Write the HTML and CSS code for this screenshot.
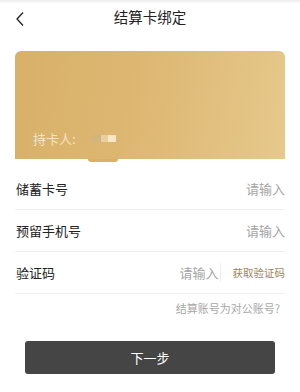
FILE: index.html
```html
<!DOCTYPE html>
<html>
<head>
  <meta charset="utf-8" />
  <title>结算卡绑定</title>
  <link rel="stylesheet" href="styles.css">
</head>
<body>
  <div class="header">
    <a class="back">
      <svg width="10" height="16" viewBox="0 0 10 16"><path d="M8 1.5 L2 8 L8 14.5" fill="none" stroke="#222" stroke-width="1.3"/></svg>
    </a>
    <span class="title">结算卡绑定</span>
  </div>

  <div class="card">
    <div class="holder">
      <span>持卡人:</span>
      <span class="mask"><i class="m1"></i><i class="m2"></i><i class="m3"></i></span>
    </div>
    <div class="notch"></div>
  </div>

  <div class="form">
    <div class="row">
      <span class="label">储蓄卡号</span>
      <span class="input">请输入</span>
    </div>
    <div class="row">
      <span class="label">预留手机号</span>
      <span class="input">请输入</span>
    </div>
    <div class="row">
      <span class="label">验证码</span>
      <span class="input code">请输入</span>
      <span class="get-code">获取验证码</span>
    </div>
  </div>

  <div class="public"><a>结算账号为对公账号?</a></div>

  <div class="actions">
    <a class="next">下一步</a>
  </div>
</body>
</html>
```

FILE: styles.css
```css
html, body {
  margin: 0;
  padding: 0;
}

body {
  width: 300px;
  height: 392px;
  font-family: "Noto Sans CJK SC", "Noto Sans", sans-serif;
  color: #222;
  overflow: hidden;
  background: linear-gradient(to bottom, #ececec 0, #fff 4px);
}

.header {
  display: flex;
  align-items: center;
  justify-content: center;
  height: 32px;
  position: relative;
}

.header .back {
  position: absolute;
  left: 15px;
  top: 8px;
}

.header .title {
  font-size: 14.5px;
  color: #222;
}

.card {
  margin: 19px 15px 0;
  height: 108px;
  border-radius: 6px 6px 0 0;
  background: linear-gradient(100deg, #d8b068 0%, #deb874 50%, #e6c98c 100%);
  display: flex;
  flex-direction: column;
  justify-content: flex-end;
  position: relative;
}

.holder {
  display: flex;
  align-items: center;
  padding: 0 0 11px 18px;
  color: #f4e4c4;
  font-size: 13px;
}

.mask {
  display: flex;
  margin-left: 16px;
}

.mask i {
  display: block;
  height: 7px;
}

.mask .m1 { width: 9px; background: #d2b57d; }
.mask .m2 { width: 7px; background: #e8cf9d; }
.mask .m3 { width: 8px; background: #f8e6c6; }

.notch {
  position: absolute;
  left: 73px;
  bottom: -3px;
  width: 30px;
  height: 3px;
  border-radius: 0 0 15px 15px;
  background: #dcb06a;
}

.form {
  margin: 9px 15px 0;
}

.row {
  display: flex;
  align-items: center;
  height: 41px;
  border-bottom: 1px solid #f0f0f0;
  font-size: 13px;
}

.row .label {
  flex: 1;
  padding-left: 1px;
  color: #222;
}

.row .input {
  color: #a5a5a5;
}

.row .input.code {
  padding-right: 1px;
  border-right: 1px solid #eee;
}

.row .get-code {
  margin-left: 12px;
  font-size: 10.5px;
  color: #9c8558;
}

.public {
  display: flex;
  justify-content: flex-end;
  padding: 6px 20px 0;
  font-size: 11px;
  color: #a8a8a8;
}

.actions {
  padding: 25px 25px 0;
}

.next {
  display: flex;
  align-items: center;
  justify-content: center;
  height: 33px;
  border-radius: 3px;
  background: #454545;
  color: #fff;
  font-size: 13px;
}
```
